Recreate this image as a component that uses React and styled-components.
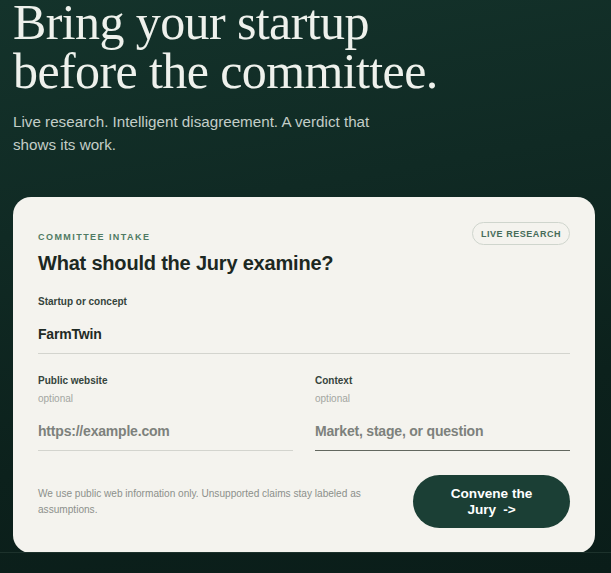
import React from 'react';
import styled, { createGlobalStyle } from 'styled-components';

const GlobalStyle = createGlobalStyle`
  html, body {
    margin: 0;
    padding: 0;
    min-height: 100%;
    background: #0b1f1b;
  }
  body {
    font-family: "Liberation Sans", Arial, sans-serif;
    overflow: hidden;
  }
  * {
    box-sizing: border-box;
  }
`;

// Page shell
const Page = styled.div`
  min-height: 100vh;
  background: linear-gradient(170deg, #14332b 0%, #102a24 35%, #0c211c 70%, #0a1d19 100%);
  display: flex;
  flex-direction: column;
`;

const Hero = styled.section`
  padding: 0 16px 0 13px;
`;

const Headline = styled.h1`
  margin: -2px 0 0;
  font-family: "Liberation Serif", "Times New Roman", serif;
  font-weight: 400;
  font-size: 50px;
  line-height: 49px;
  letter-spacing: -0.6px;
  color: #eef1ec;
`;

const Lede = styled.p`
  margin: 14px 0 0;
  max-width: 380px;
  font-size: 15.2px;
  line-height: 23px;
  color: #c3cec8;
`;

const Card = styled.form`
  margin-top: 41px;
  background: #f4f3ee;
  border-radius: 18px;
  padding: 25px;
  display: flex;
  flex-direction: column;
`;

const CardHeader = styled.div`
  display: flex;
  justify-content: space-between;
  align-items: flex-start;
`;

const Eyebrow = styled.div`
  margin-top: 8px;
  font-size: 9px;
  line-height: 14px;
  font-weight: 700;
  letter-spacing: 0.16em;
  text-transform: uppercase;
  color: #4f7a63;
`;

const CardTitle = styled.h2`
  margin: 7px 0 0;
  font-size: 20px;
  line-height: 24px;
  font-weight: 700;
  letter-spacing: -0.2px;
  color: #1c2822;
`;

const Pill = styled.span`
  height: 23px;
  padding: 0 8px;
  display: inline-flex;
  align-items: center;
  border: 1px solid #cfd5cd;
  border-radius: 999px;
  font-size: 9px;
  font-weight: 700;
  letter-spacing: 0.06em;
  color: #466c59;
`;

const FieldRow = styled.div`
  display: grid;
  grid-template-columns: ${(p) => (p.$single ? '1fr' : '1fr 1fr')};
  gap: 22px;
  margin-top: 20px;
`;

const Field = styled.label`
  display: flex;
  flex-direction: column;
`;

const Label = styled.span`
  font-size: 10px;
  line-height: 14px;
  font-weight: 700;
  color: #35443c;
`;

const Hint = styled.span`
  margin-top: 4px;
  font-size: 10px;
  line-height: 14px;
  color: #a3a6a1;
`;

const Input = styled.input`
  margin-top: 5px;
  height: 40px;
  padding: 0;
  border: none;
  border-bottom: 1px solid ${(p) => (p.$active ? '#62675f' : '#d3d4ce')};
  background: transparent;
  outline: none;
  font-family: "Liberation Sans", Arial, sans-serif;
  font-size: 14px;
  font-weight: 700;
  letter-spacing: -0.2px;
  color: #1f2a24;

  &::placeholder {
    color: #7d817c;
    opacity: 1;
  }
`;

const Footer = styled.div`
  margin-top: 24px;
  display: flex;
  align-items: center;
  justify-content: space-between;
  gap: 40px;
`;

const Note = styled.p`
  margin: 0;
  max-width: 335px;
  font-size: 10.1px;
  line-height: 16px;
  color: #8c908b;
`;

const ConveneButton = styled.button`
  width: 157px;
  height: 53px;
  flex-shrink: 0;
  padding: 0 34px;
  border: none;
  border-radius: 999px;
  background: #1b3f35;
  color: #ffffff;
  font-family: "Liberation Sans", Arial, sans-serif;
  font-size: 13.6px;
  line-height: 16px;
  font-weight: 700;
  cursor: pointer;
`;

const Arrow = styled.span`
  margin-left: 7px;
`;

const BottomStrip = styled.div`
  flex: 1;
  border-top: 1px solid #1d322c;
  margin-top: -1px;
`;

export default function App() {
  return (
    <>
      <GlobalStyle />
      <Page>
        <Hero>
          <Headline>
            Bring your startup
            <br />
            before the committee.
          </Headline>
          <Lede>Live research. Intelligent disagreement. A verdict that shows its work.</Lede>

          <Card onSubmit={(e) => e.preventDefault()}>
            <CardHeader>
              <div>
                <Eyebrow>Committee intake</Eyebrow>
                <CardTitle>What should the Jury examine?</CardTitle>
              </div>
              <Pill>LIVE RESEARCH</Pill>
            </CardHeader>

            <FieldRow $single>
              <Field>
                <Label>Startup or concept</Label>
                <Input defaultValue="FarmTwin" />
              </Field>
            </FieldRow>

            <FieldRow>
              <Field>
                <Label>Public website</Label>
                <Hint>optional</Hint>
                <Input placeholder="https://example.com" />
              </Field>
              <Field>
                <Label>Context</Label>
                <Hint>optional</Hint>
                <Input $active placeholder="Market, stage, or question" />
              </Field>
            </FieldRow>

            <Footer>
              <Note>
                We use public web information only. Unsupported claims stay labeled as assumptions.
              </Note>
              <ConveneButton type="submit">
                Convene the Jury<Arrow>-&gt;</Arrow>
              </ConveneButton>
            </Footer>
          </Card>
        </Hero>
        <BottomStrip />
      </Page>
    </>
  );
}
